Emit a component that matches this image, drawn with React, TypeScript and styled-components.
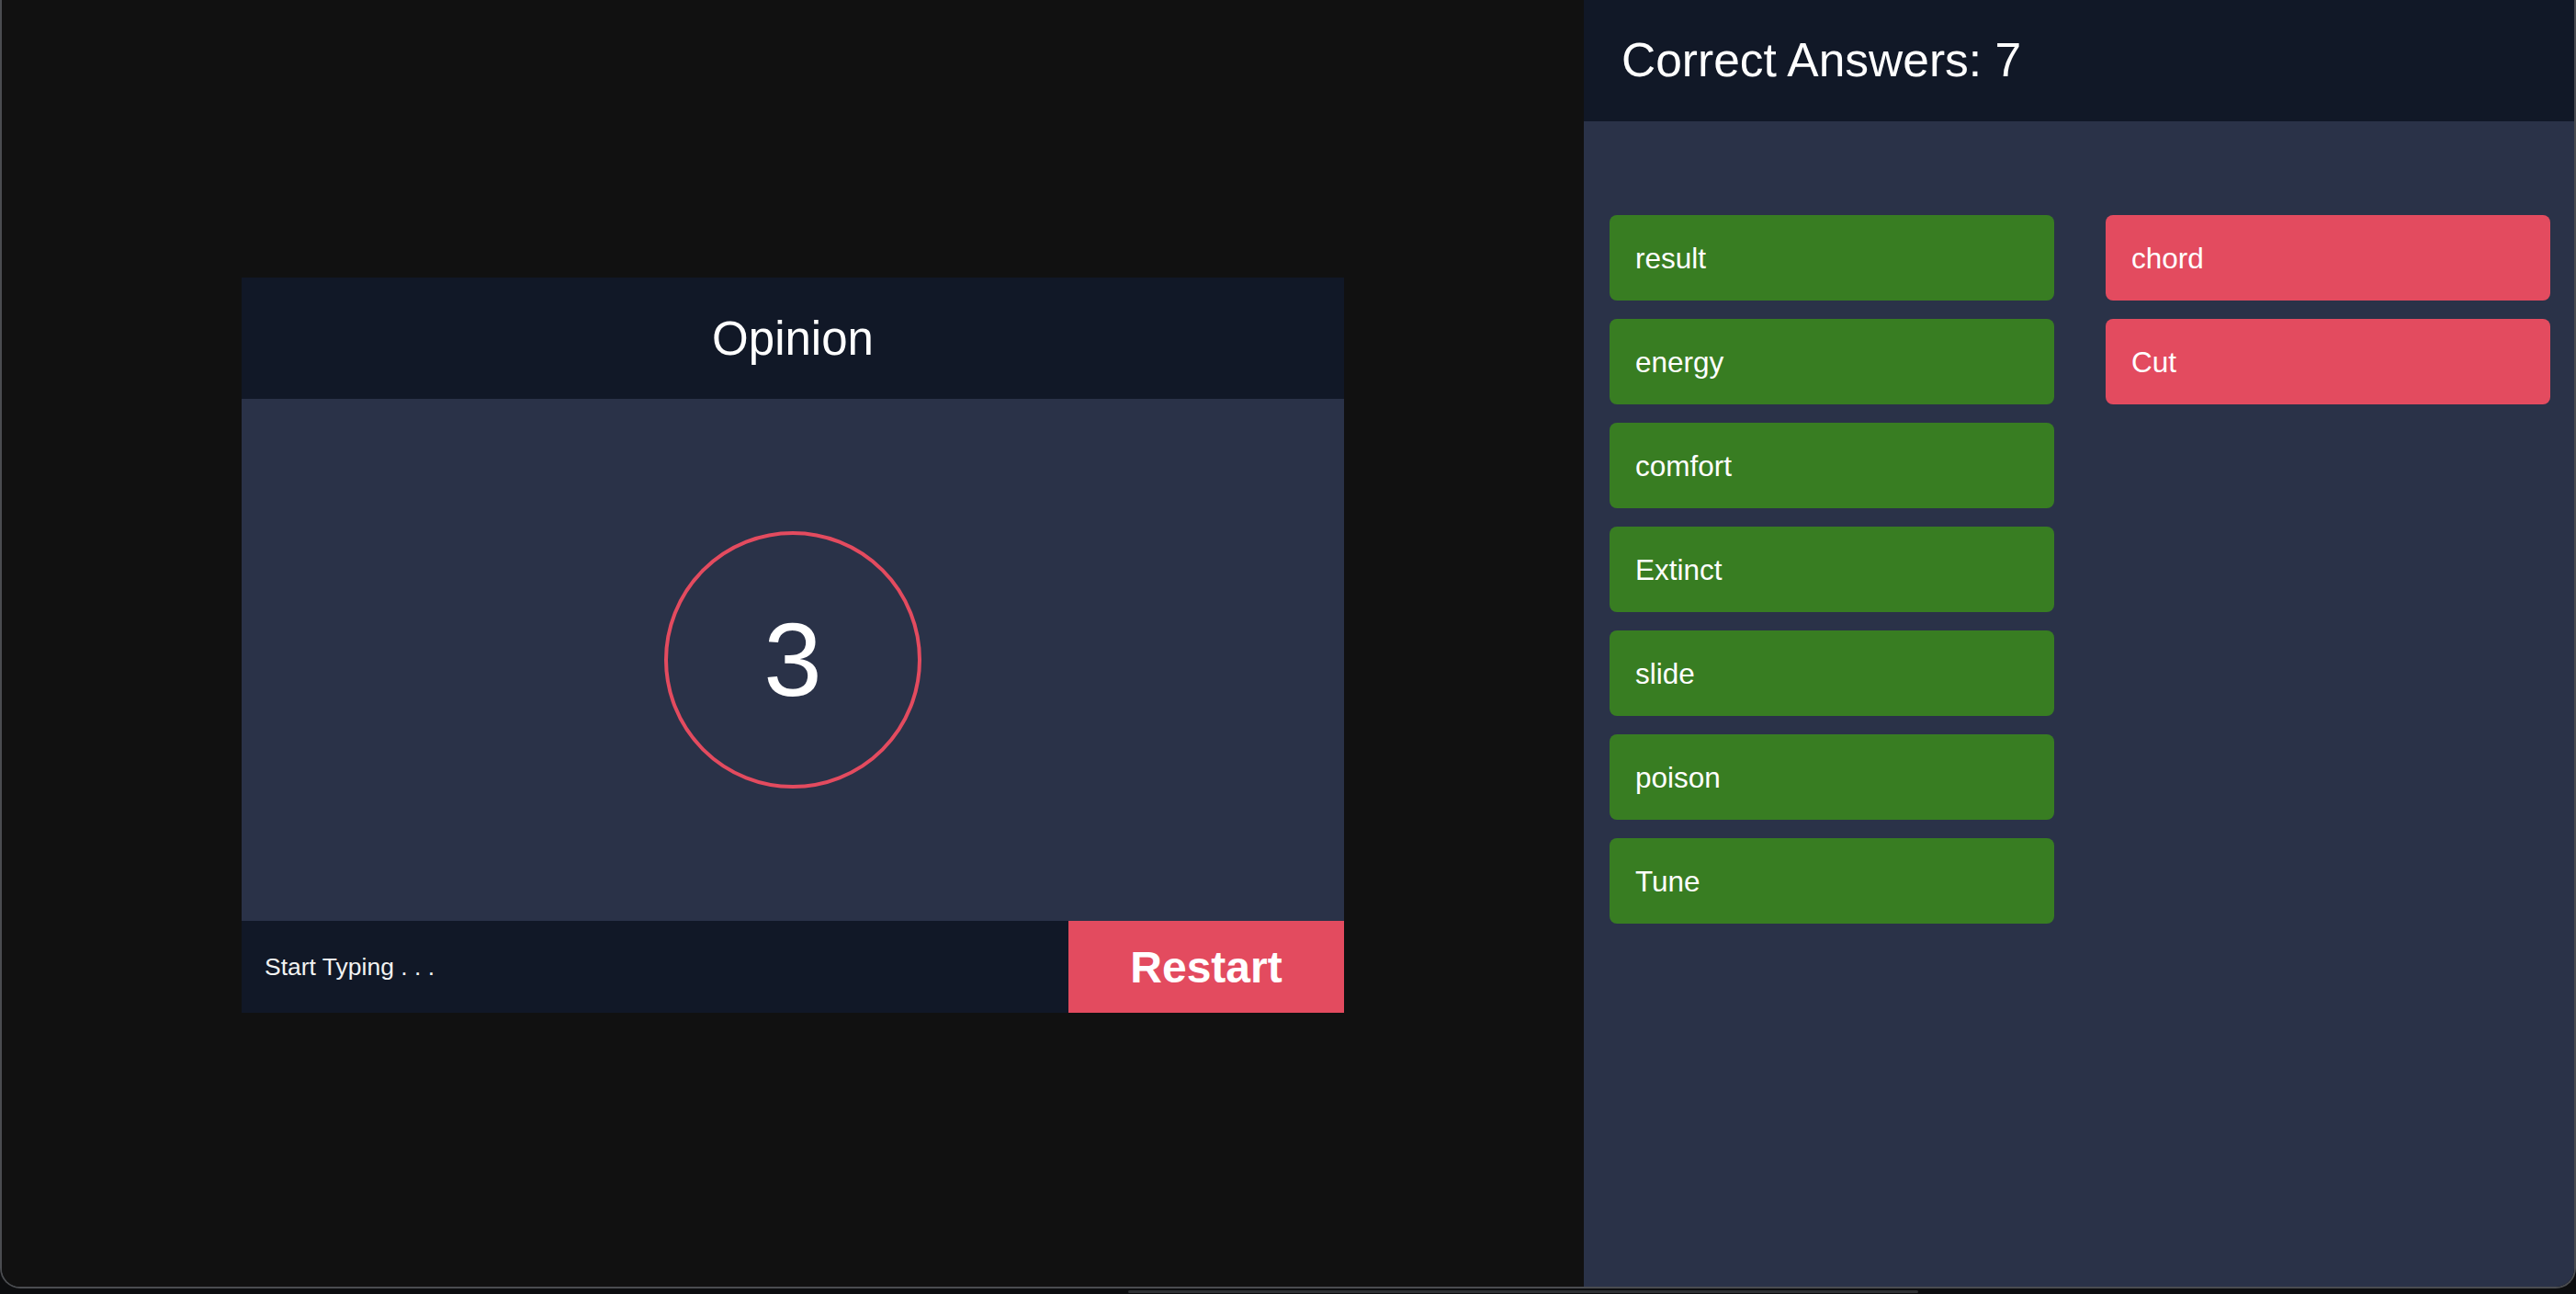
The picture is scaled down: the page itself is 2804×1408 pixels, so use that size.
import React from 'react';
import styled, { createGlobalStyle } from 'styled-components';

const GlobalStyle = createGlobalStyle`
  html, body {
    margin: 0;
    padding: 0;
    background: #0c0d0f;
    font-family: "Liberation Sans", Arial, Helvetica, sans-serif;
    color: #ffffff;
  }
  * {
    box-sizing: border-box;
  }
`;

const Screen = styled.div`
  width: 2804px;
  height: 1408px;
  display: flex;
  flex-direction: column;
`;

const Window = styled.div`
  height: 1402px;
  display: flex;
  border: 2px solid #4a4c50;
  border-top: none;
  border-radius: 0 0 22px 22px;
  overflow: hidden;
`;

const DockBar = styled.div`
  height: 6px;
  display: flex;
  justify-content: center;
  align-items: center;
`;

const DockLine = styled.div`
  width: 860px;
  height: 3px;
  margin-left: 512px;
  background: #2e3034;
  border-radius: 2px;
`;

const GameArea = styled.div`
  flex: 1;
  background: #111111;
  display: flex;
  align-items: center;
  justify-content: center;
  padding-top: 4px;
`;

const Card = styled.div`
  width: 1200px;
  height: 800px;
  display: flex;
  flex-direction: column;
`;

const CardHeader = styled.div`
  height: 132px;
  background: #111827;
  display: flex;
  align-items: center;
  justify-content: center;
  font-size: 51px;
`;

const CardBody = styled.div`
  flex: 1;
  background: #2a3248;
  display: flex;
  align-items: center;
  justify-content: center;
`;

const Timer = styled.div`
  width: 280px;
  height: 280px;
  border: 4px solid #e34b5f;
  border-radius: 50%;
  display: flex;
  align-items: center;
  justify-content: center;
  font-size: 114px;
  line-height: 1;
`;

const CardFooter = styled.div`
  height: 100px;
  display: flex;
  background: #111827;
`;

const TypingInput = styled.input`
  flex: 1;
  min-width: 0;
  height: 100%;
  border: none;
  outline: none;
  background: transparent;
  padding: 0 0 0 25px;
  color: #ffffff;
  font-family: inherit;
  font-size: 26.5px;

  &::placeholder {
    color: #f2f2f2;
    opacity: 1;
  }
`;

const RestartButton = styled.button`
  width: 300px;
  height: 100%;
  border: none;
  background: #e34b5f;
  color: #ffffff;
  font-family: inherit;
  font-weight: bold;
  font-size: 48px;
  cursor: pointer;
`;

const Sidebar = styled.div`
  width: 1078px;
  background: #2a3248;
  display: flex;
  flex-direction: column;
`;

const SidebarHeader = styled.div`
  height: 132px;
  background: #111827;
  display: flex;
  align-items: center;
  padding-left: 41px;
  padding-bottom: 2px;
  font-size: 51.5px;
`;

const Columns = styled.div`
  display: grid;
  grid-template-columns: 484px 484px;
  column-gap: 56px;
  padding: 102px 28px 0 28px;
  align-items: start;
`;

const WordColumn = styled.div`
  display: flex;
  flex-direction: column;
  gap: 20px;
`;

const Word = styled.div<{ $correct: boolean }>`
  height: 93px;
  border-radius: 8px;
  background: ${({ $correct }) => ($correct ? '#387d22' : '#e34b5f')};
  display: flex;
  align-items: center;
  padding-left: 28px;
  padding-top: 2px;
  font-size: 31.5px;
`;

const correctWords = ['result', 'energy', 'comfort', 'Extinct', 'slide', 'poison', 'Tune'];
const wrongWords = ['chord', 'Cut'];

export default function App() {
  return (
    <>
      <GlobalStyle />
      <Screen>
        <Window>
          <GameArea>
            <Card>
              <CardHeader>Opinion</CardHeader>
              <CardBody>
                <Timer>3</Timer>
              </CardBody>
              <CardFooter>
                <TypingInput placeholder="Start Typing . . ." />
                <RestartButton>Restart</RestartButton>
              </CardFooter>
            </Card>
          </GameArea>
          <Sidebar>
            <SidebarHeader>Correct Answers: {correctWords.length}</SidebarHeader>
            <Columns>
              <WordColumn>
                {correctWords.map((w) => (
                  <Word key={w} $correct>
                    {w}
                  </Word>
                ))}
              </WordColumn>
              <WordColumn>
                {wrongWords.map((w) => (
                  <Word key={w} $correct={false}>
                    {w}
                  </Word>
                ))}
              </WordColumn>
            </Columns>
          </Sidebar>
        </Window>
        <DockBar>
          <DockLine />
        </DockBar>
      </Screen>
    </>
  );
}
